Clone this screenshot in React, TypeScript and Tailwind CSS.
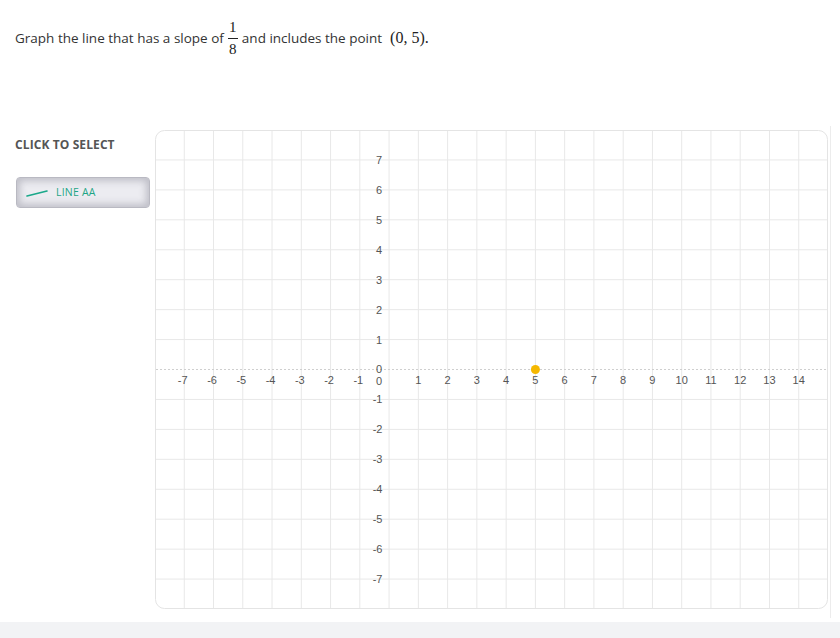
import React from "react";

const W = 673;
const H = 479;
const UX = W / 23;
const UY = H / 16;
const OX = 8 * UX;
const OY = 8 * UY;

function Graph() {
  const vlines = [];
  for (let k = -7; k <= 14; k++) vlines.push(k);
  const hlines = [];
  for (let k = -7; k <= 7; k++) hlines.push(k);
  return (
    <svg width={W} height={H} viewBox={`0 0 ${W} ${H}`} className="block">
      <rect x={0.5} y={0.5} width={W - 1} height={H - 1} rx={9} fill="#ffffff" stroke="#e4e4e4" />
      {vlines.map((k) => (
        <line key={"v" + k} x1={OX + k * UX} x2={OX + k * UX} y1={1} y2={H - 1} stroke="#e8e8e8" strokeWidth={1} />
      ))}
      {hlines.map((k) =>
        k === 0 ? null : (
          <line key={"h" + k} x1={1} x2={W - 1} y1={OY - k * UY} y2={OY - k * UY} stroke="#e8e8e8" strokeWidth={1} />
        )
      )}
      <line x1={1} x2={W - 1} y1={OY} y2={OY} stroke="#cfcfcf" strokeWidth={1} strokeDasharray="2 2" />
      <g fontFamily="'Liberation Sans', Arial, sans-serif" fontSize={11} fill="#555">
        {vlines.map((k) =>
          k === 0 ? null : (
            <text key={"xl" + k} x={OX + k * UX + (k < 0 ? -1.5 : 0)} y={OY + 14} textAnchor="middle">
              {k}
            </text>
          )
        )}
        <text x={OX - 10} y={OY + 15} textAnchor="middle">0</text>
        {hlines.map((k) => (
          <text key={"yl" + k} x={OX - 10 + (k < 0 ? -1.5 : 0)} y={OY - k * UY + (k === 0 ? 3 : 4)} textAnchor="middle">
            {k}
          </text>
        ))}
      </g>
      <circle cx={OX + 5 * UX} cy={OY} r={4.5} fill="#f5b800" />
    </svg>
  );
}

export default function App() {
  return (
    <div className="w-[840px] h-[638px] flex flex-col bg-white" style={{ fontFamily: "'Open Sans', 'Noto Sans', sans-serif" }}>
      <div className="flex-1 flex flex-col pl-[15px] pt-[18px]">
        <div className="flex items-center h-[40px] text-[13.5px] text-[#333]">
          <span>Graph the line that has a slope of</span>
          <span className="inline-flex flex-col items-center mx-[4px] font-['Liberation_Serif',serif] text-[15px] leading-none text-[#222]">
            <span className="pb-[3px]">1</span>
            <span className="w-[10px] h-[1px] bg-[#222]" />
            <span className="pt-[3px]">8</span>
          </span>
          <span>and includes the point</span>
          <span className="ml-[8px] font-['Liberation_Serif',serif] text-[16px] text-[#222]">(0, 5).</span>
        </div>
        <div className="flex mt-[72px]">
          <div className="w-[140px] flex flex-col">
            <div className="mt-[6px] text-[12px] font-bold text-[#555] tracking-[0.1px]">CLICK TO SELECT</div>
            <div className="mt-[23px] ml-[1px] w-[134px] h-[31px] rounded-[4px] bg-[#ececf1] shadow-[inset_0_0_7px_3px_rgba(60,60,80,0.25)] border border-[#b9b9c2] flex items-center pl-[9px]">
              <svg width="22" height="8" viewBox="0 0 22 8" className="mr-[8px]">
                <line x1="1" y1="7" x2="21" y2="2" stroke="#1aa88a" strokeWidth="1.6" strokeLinecap="round" />
              </svg>
              <span className="text-[10.5px] text-[#1ea586] tracking-[0.2px]">LINE AA</span>
            </div>
          </div>
          <div className="pr-[2px] border-r border-[#ececec] h-[492px] -mt-[4px] pt-[4px]">
            <Graph />
          </div>
        </div>
      </div>
      <div className="h-[16px] bg-[#f2f3f5]" />
    </div>
  );
}
